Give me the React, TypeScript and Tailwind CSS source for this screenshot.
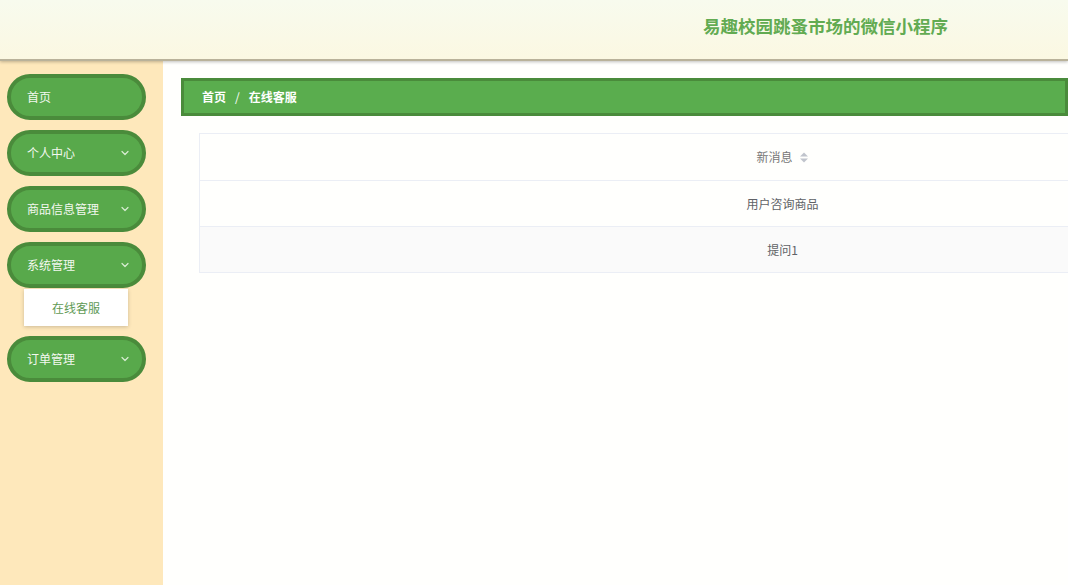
import React from "react";

const font = { fontFamily: '"Noto Sans CJK SC", "Microsoft YaHei", sans-serif' };

function Chevron() {
  return (
    <svg width="10" height="10" viewBox="0 0 10 10" fill="none" className="mr-[4px]">
      <path d="M2 3.5 L5 6.5 L8 3.5" stroke="#d8ecd2" strokeWidth="1.2" strokeLinecap="round" strokeLinejoin="round" />
    </svg>
  );
}

function MenuButton({ label, arrow }: { label: string; arrow?: boolean }) {
  return (
    <div className="w-[139px] h-[46px] rounded-full border-[4px] border-[#4a8b3b] bg-[#58a94b] flex items-center justify-between pl-[16px] pr-[8px] text-[12px] text-[#f3f8ef]">
      <span className="mt-[-1px]">{label}</span>
      {arrow && <Chevron />}
    </div>
  );
}

export default function App() {
  return (
    <div className="w-[1068px] h-[585px] overflow-hidden bg-[#fffffd] flex flex-col" style={font}>
      <header className="h-[61px] shrink-0 bg-gradient-to-b from-[#f8fbee] to-[#fbf8e2] border-b-[2px] border-[#b9b29a] shadow-[0_1px_3px_rgba(0,0,0,0.25)] flex items-center justify-end pr-[120px] relative z-10">
        <h1 className="text-[17.5px] font-bold text-[#62ab52] mt-[-6px]">易趣校园跳蚤市场的微信小程序</h1>
      </header>
      <div className="flex flex-1 min-h-0">
        <aside className="w-[163px] shrink-0 bg-[#fee8bb] pt-[13px] pl-[7px] flex flex-col gap-[10px]">
          <MenuButton label="首页" />
          <MenuButton label="个人中心" arrow />
          <MenuButton label="商品信息管理" arrow />
          <div className="flex flex-col">
            <MenuButton label="系统管理" arrow />
            <div className="ml-[17px] mt-[1px] w-[104px] h-[37px] bg-white shadow-[0_1px_4px_rgba(0,0,0,0.2)] flex items-center justify-center text-[12px] text-[#5f9a55]">
              在线客服
            </div>
          </div>
          <MenuButton label="订单管理" arrow />
        </aside>
        <main className="flex-1 min-w-0 pt-[17px] pl-[18px] overflow-hidden">
          <div className="h-[38px] border-[3px] border-[#4a8b3b] bg-[#5aad4e] flex items-center pl-[18px] text-[12px] font-bold text-white">
            <span>首页</span>
            <span className="mx-[9px] font-normal">/</span>
            <span>在线客服</span>
          </div>
          <div className="mt-[17px] ml-[18px] w-[1167px] border border-[#ebeef5] text-[12px]">
            <div className="h-[47px] flex items-center justify-center border-b border-[#ebeef5] bg-[#fffffd] text-[#777]">
              <span>新消息</span>
              <svg width="10" height="13" viewBox="0 0 10 13" className="ml-[6px]">
                <path d="M5 1.5 L9 5.5 L1 5.5 Z" fill="#c0c4cc" />
                <path d="M5 11.5 L9 7.5 L1 7.5 Z" fill="#c0c4cc" />
              </svg>
            </div>
            <div className="h-[46px] flex items-center justify-center border-b border-[#ebeef5] bg-[#fffffd] text-[#606266]">
              用户咨询商品
            </div>
            <div className="h-[45px] flex items-center justify-center bg-[#fafafa] text-[#606266]">
              提问1
            </div>
          </div>
        </main>
      </div>
    </div>
  );
}
